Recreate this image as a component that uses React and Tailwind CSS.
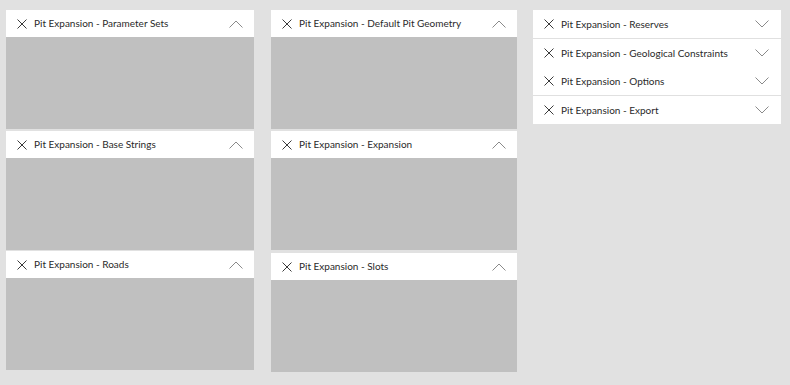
import React from 'react';

const CloseIcon = () => (
  <svg width="10" height="10" viewBox="0 0 10 10" className="shrink-0">
    <path d="M0.5 0.5 L9.5 9.5 M9.5 0.5 L0.5 9.5" stroke="#3a3a3a" strokeWidth="1" fill="none" />
  </svg>
);

const Chevron = ({ up }) => (
  <svg width="14" height="8" viewBox="0 0 14 8" className="shrink-0">
    <path
      d={up ? 'M0.5 7.5 L7 1 L13.5 7.5' : 'M0.5 0.5 L7 7 L13.5 0.5'}
      stroke="#8a8a8a"
      strokeWidth="1"
      fill="none"
    />
  </svg>
);

const Header = ({ title, up }) => (
  <div className="flex items-center h-[27px] bg-white pl-[11px] pr-[11px]">
    <CloseIcon />
    <span className="ml-[7px] flex-1 text-[10px] text-[#2a2a2a] font-['Lato',sans-serif] whitespace-nowrap">{title}</span>
    <Chevron up={up} />
  </div>
);

const Panel = ({ title, className = '' }) => (
  <div className={`flex flex-col ${className}`}>
    <Header title={title} up />
    <div className="h-[92px] bg-[#c0c0c0]" />
  </div>
);

const COLLAPSED = [
  { title: 'Pit Expansion - Reserves', border: false },
  { title: 'Pit Expansion - Geological Constraints', border: true },
  { title: 'Pit Expansion - Options', border: false },
  { title: 'Pit Expansion - Export', border: true },
];

export default function App() {
  return (
    <div className="w-[790px] h-[385px] bg-[#e1e1e1] flex items-start pt-[10px] pl-[6px]">
      <div className="w-[248px] flex flex-col">
        <Panel title="Pit Expansion - Parameter Sets" />
        <Panel title="Pit Expansion - Base Strings" className="mt-[2px]" />
        <Panel title="Pit Expansion - Roads" className="mt-[1px]" />
      </div>
      <div className="w-[246px] ml-[17px] flex flex-col">
        <Panel title="Pit Expansion - Default Pit Geometry" />
        <Panel title="Pit Expansion - Expansion" className="mt-[2px]" />
        <Panel title="Pit Expansion - Slots" className="mt-[3px]" />
      </div>
      <div className="w-[248px] ml-[16px] flex flex-col bg-white">
        {COLLAPSED.map(({ title, border }) => (
          <div key={title} className={border ? 'border-t border-[#e0e0e0]' : ''}>
            <div className="flex items-center h-[28px] pl-[11px] pr-[12px]">
              <CloseIcon />
              <span className="ml-[7px] flex-1 text-[10px] text-[#2a2a2a] font-['Lato',sans-serif] whitespace-nowrap">{title}</span>
              <Chevron />
            </div>
          </div>
        ))}
      </div>
    </div>
  );
}
